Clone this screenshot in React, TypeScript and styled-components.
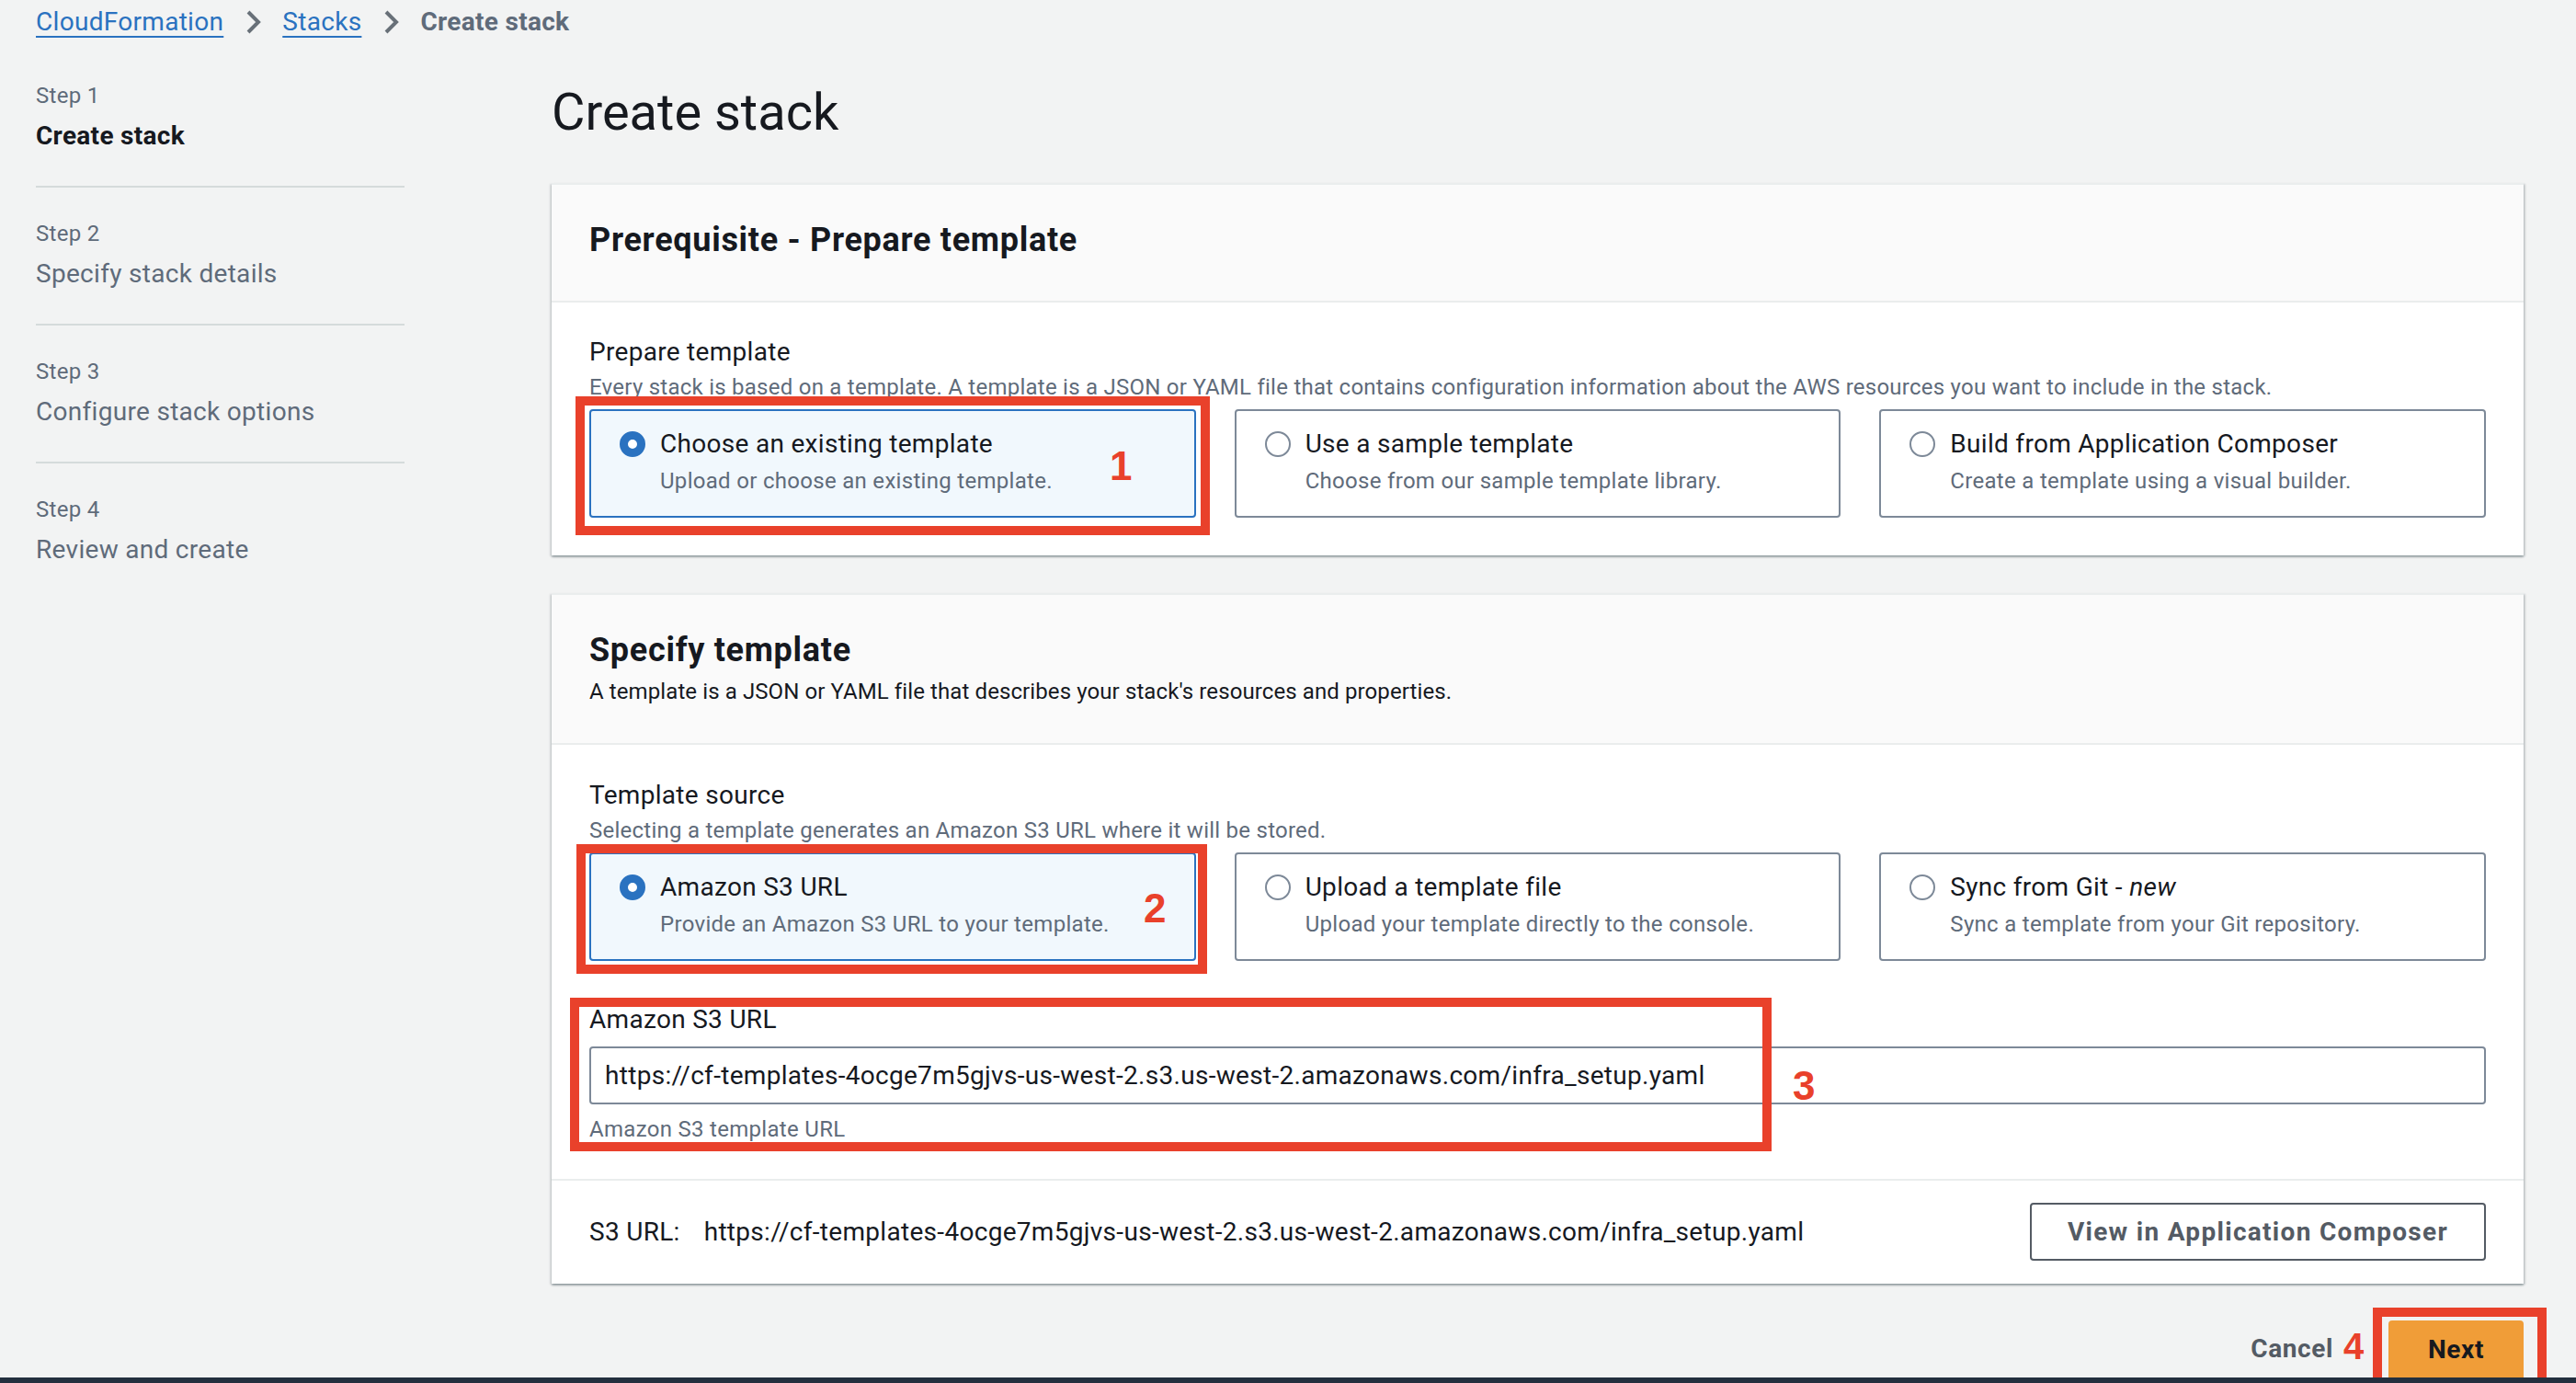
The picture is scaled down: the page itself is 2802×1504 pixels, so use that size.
import React from "react";
import styled, { createGlobalStyle } from "styled-components";

const GlobalStyle = createGlobalStyle`
  *, *::before, *::after { box-sizing: border-box; }
  html, body { margin: 0; padding: 0; background: #f2f3f3; }
  body {
    font-family: Roboto, "Liberation Sans", Arial, sans-serif;
    color: #16191f;
    letter-spacing: 0.3px;
    overflow: hidden;
  }
`;

const RED = "#e9412b";
const BLUE = "#2a72c0";
const GRAY_TEXT = "#5f6b7a";

const Page = styled.div`
  height: 1504px;
  display: flex;
  flex-direction: column;
  overflow: hidden;
`;

const Breadcrumbs = styled.nav`
  display: flex;
  align-items: center;
  gap: 16px;
  height: 44px;
  padding: 4px 0 0 39px;
  font-size: 28px;
  line-height: 40px;
`;

const Crumb = styled.a`
  color: ${BLUE};
  text-decoration: underline;
  text-decoration-thickness: 2px;
  text-underline-offset: 6px;
  cursor: pointer;
`;

const CurrentCrumb = styled.span`
  color: ${GRAY_TEXT};
  font-weight: 700;
`;

const Chevron = styled.svg`
  width: 32px;
  height: 32px;
  flex: none;
`;

const Layout = styled.div`
  flex: 1;
  display: grid;
  grid-template-columns: 401px 1fr;
  column-gap: 160px;
  padding: 0 57px 0 39px;
`;

const StepList = styled.ol`
  list-style: none;
  margin: 0;
  padding: 10px 0 0;
`;

const StepItem = styled.li<{ $last?: boolean }>`
  padding: 34px 0 34px;
  border-bottom: ${(p) => (p.$last ? "none" : "2px solid #d5dbdb")};
`;

const StepLabel = styled.div`
  font-size: 24px;
  line-height: 32px;
  color: ${GRAY_TEXT};
`;

const StepTitle = styled.div<{ $active?: boolean }>`
  margin-top: 8px;
  font-size: 28px;
  line-height: 40px;
  color: ${(p) => (p.$active ? "#16191f" : GRAY_TEXT)};
  font-weight: ${(p) => (p.$active ? 700 : 400)};
`;

const Main = styled.main`
  display: flex;
  flex-direction: column;
`;

const Title = styled.h1`
  margin: 46px 0 45px;
  font-size: 56px;
  line-height: 64px;
  font-weight: 400;
  letter-spacing: 0;
  color: #16191f;
`;

const Cards = styled.div`
  display: flex;
  flex-direction: column;
  gap: 41px;
`;

const Card = styled.section`
  background: #ffffff;
  border-top: 2px solid #eaeded;
  box-shadow: 0 2px 2px 0 rgba(0, 28, 36, 0.28), 2px 1px 2px 0 rgba(0, 28, 36, 0.14),
    -2px 1px 2px 0 rgba(0, 28, 36, 0.1);
`;

const CardHeader = styled.header<{ $bottom: number }>`
  background: #fafafa;
  padding: 38px 41px ${(p) => p.$bottom}px;
  border-bottom: 2px solid #eaeded;
`;

const CardTitle = styled.h2`
  margin: 0;
  font-size: 36px;
  line-height: 44px;
  font-weight: 700;
  letter-spacing: 0.7px;
  color: #16191f;
`;

const CardDescription = styled.p`
  margin: 7px 0 0;
  font-size: 24px;
  line-height: 32px;
  letter-spacing: 0.1px;
  color: #16191f;
`;

const CardBody = styled.div<{ $top: number; $bottom: number }>`
  padding: ${(p) => p.$top}px 41px ${(p) => p.$bottom}px;
`;

const FieldLabel = styled.div`
  font-size: 28px;
  line-height: 40px;
  color: #16191f;
`;

const FieldDescription = styled.div`
  margin-top: 2px;
  font-size: 24px;
  line-height: 32px;
  letter-spacing: 0.25px;
  color: ${GRAY_TEXT};
`;

const TileGrid = styled.div`
  margin-top: 8px;
  display: grid;
  grid-template-columns: repeat(3, 1fr);
  column-gap: 42px;
`;

const Annotated = styled.div`
  position: relative;
`;

const RedBox = styled.div<{ $t: number; $r: number; $b: number; $l: number }>`
  position: absolute;
  top: ${(p) => p.$t}px;
  right: ${(p) => p.$r}px;
  bottom: ${(p) => p.$b}px;
  left: ${(p) => p.$l}px;
  border: 10px solid ${RED};
  pointer-events: none;
  z-index: 1;
`;

const Marker = styled.span<{ $x: number; $y: number; $size?: number }>`
  position: absolute;
  left: ${(p) => p.$x}px;
  top: ${(p) => p.$y}px;
  font-family: "Liberation Sans", Arial, sans-serif;
  font-size: ${(p) => p.$size ?? 44}px;
  line-height: ${(p) => p.$size ?? 44}px;
  font-weight: 700;
  letter-spacing: 0;
  color: ${RED};
  z-index: 1;
`;

const Tile = styled.label<{ $selected?: boolean }>`
  display: flex;
  align-items: flex-start;
  gap: 16px;
  height: 118px;
  padding: 16px 30px 22px 31px;
  border: 2px solid ${(p) => (p.$selected ? BLUE : "#7d8998")};
  border-radius: 4px;
  background: ${(p) => (p.$selected ? "#f1f8fd" : "#ffffff")};
  cursor: pointer;
`;

const Radio = styled.span<{ $checked?: boolean }>`
  flex: none;
  width: 28px;
  height: 28px;
  margin-top: 6px;
  border-radius: 50%;
  background: #ffffff;
  border: ${(p) => (p.$checked ? `9px solid ${BLUE}` : "2px solid #7d8998")};
`;

const TileText = styled.div`
  display: flex;
  flex-direction: column;
`;

const TileTitle = styled.span`
  font-size: 28px;
  line-height: 40px;
  color: #16191f;
  white-space: nowrap;
`;

const TileDescription = styled.span`
  margin-top: 4px;
  font-size: 24px;
  line-height: 32px;
  color: ${GRAY_TEXT};
  white-space: nowrap;
`;

const Field = styled.div`
  margin-top: 44px;
`;

const TextInput = styled.input`
  display: block;
  width: 100%;
  height: 63px;
  margin-top: 9px;
  padding: 0 15px;
  border: 2px solid #7d8998;
  border-radius: 4px;
  background: #ffffff;
  font-family: inherit;
  font-size: 28px;
  letter-spacing: 0.3px;
  color: #16191f;
  outline: none;
`;

const HelperText = styled.div`
  margin-top: 11px;
  font-size: 24px;
  line-height: 32px;
  color: ${GRAY_TEXT};
`;

const CardFooter = styled.footer`
  display: flex;
  align-items: center;
  justify-content: space-between;
  padding: 24px 41px 25px;
  border-top: 2px solid #eaeded;
`;

const UrlLine = styled.div`
  display: flex;
  gap: 26px;
  font-size: 28px;
  line-height: 40px;
  color: #16191f;
`;

const SecondaryButton = styled.button`
  height: 63px;
  padding: 0 39px;
  border: 2px solid #545b64;
  border-radius: 4px;
  background: #ffffff;
  font-family: inherit;
  font-size: 28px;
  font-weight: 700;
  letter-spacing: 1.3px;
  color: #545b64;
  cursor: pointer;
`;

const Actions = styled.div`
  margin-top: 40px;
  display: flex;
  justify-content: flex-end;
  align-items: center;
  gap: 60px;
`;

const LinkButton = styled.button`
  border: none;
  padding: 0;
  background: transparent;
  font-family: inherit;
  font-size: 28px;
  line-height: 40px;
  font-weight: 700;
  letter-spacing: 0.6px;
  color: #545b64;
  cursor: pointer;
`;

const PrimaryButton = styled.button`
  height: 62px;
  width: 147px;
  border: none;
  border-radius: 4px 4px 0 0;
  background: #f09d38;
  font-family: inherit;
  font-size: 28px;
  font-weight: 700;
  letter-spacing: 0.6px;
  color: #16191f;
  cursor: pointer;
`;

const BottomBar = styled.div`
  position: relative;
  z-index: 2;
  height: 6px;
  flex: none;
  background: #232f3e;
`;

const ChevronIcon = () => (
  <Chevron viewBox="0 0 16 16" fill="none">
    <path d="M5.5 2.5l5.5 5.5-5.5 5.5" stroke="#687078" strokeWidth="2" />
  </Chevron>
);

type TileData = { title: React.ReactNode; description: string; selected?: boolean };

const TileCard = ({ title, description, selected }: TileData) => (
  <Tile $selected={selected}>
    <Radio $checked={selected} />
    <TileText>
      <TileTitle>{title}</TileTitle>
      <TileDescription>{description}</TileDescription>
    </TileText>
  </Tile>
);

const steps = [
  { label: "Step 1", title: "Create stack", active: true },
  { label: "Step 2", title: "Specify stack details" },
  { label: "Step 3", title: "Configure stack options" },
  { label: "Step 4", title: "Review and create" },
];

const S3_URL =
  "https://cf-templates-4ocge7m5gjvs-us-west-2.s3.us-west-2.amazonaws.com/infra_setup.yaml";

export default function App() {
  return (
    <Page>
      <GlobalStyle />
      <Breadcrumbs>
        <Crumb>CloudFormation</Crumb>
        <ChevronIcon />
        <Crumb>Stacks</Crumb>
        <ChevronIcon />
        <CurrentCrumb>Create stack</CurrentCrumb>
      </Breadcrumbs>
      <Layout>
        <StepList>
          {steps.map((s, i) => (
            <StepItem key={s.label} $last={i === steps.length - 1}>
              <StepLabel>{s.label}</StepLabel>
              <StepTitle $active={s.active}>{s.title}</StepTitle>
            </StepItem>
          ))}
        </StepList>
        <Main>
          <Title>Create stack</Title>
          <Cards>
            <Card>
              <CardHeader $bottom={44}>
                <CardTitle>Prerequisite - Prepare template</CardTitle>
              </CardHeader>
              <CardBody $top={34} $bottom={41}>
                <FieldLabel>Prepare template</FieldLabel>
                <FieldDescription>
                  Every stack is based on a template. A template is a JSON or YAML file that contains
                  configuration information about the AWS resources you want to include in the stack.
                </FieldDescription>
                <TileGrid>
                  <Annotated>
                    <TileCard
                      selected
                      title="Choose an existing template"
                      description="Upload or choose an existing template."
                    />
                    <RedBox $t={-14} $r={-15} $b={-19} $l={-15} />
                    <Marker $x={566} $y={40}>1</Marker>
                  </Annotated>
                  <TileCard
                    title="Use a sample template"
                    description="Choose from our sample template library."
                  />
                  <TileCard
                    title="Build from Application Composer"
                    description="Create a template using a visual builder."
                  />
                </TileGrid>
              </CardBody>
            </Card>

            <Card>
              <CardHeader $bottom={40}>
                <CardTitle>Specify template</CardTitle>
                <CardDescription>
                  A template is a JSON or YAML file that describes your stack's resources and properties.
                </CardDescription>
              </CardHeader>
              <CardBody $top={35} $bottom={38}>
                <FieldLabel>Template source</FieldLabel>
                <FieldDescription>
                  Selecting a template generates an Amazon S3 URL where it will be stored.
                </FieldDescription>
                <TileGrid>
                  <Annotated>
                    <TileCard
                      selected
                      title="Amazon S3 URL"
                      description="Provide an Amazon S3 URL to your template."
                    />
                    <RedBox $t={-9} $r={-12} $b={-14} $l={-14} />
                    <Marker $x={603} $y={39}>2</Marker>
                  </Annotated>
                  <TileCard
                    title="Upload a template file"
                    description="Upload your template directly to the console."
                  />
                  <TileCard
                    title={
                      <>
                        Sync from Git - <i>new</i>
                      </>
                    }
                    description="Sync a template from your Git repository."
                  />
                </TileGrid>
                <Field>
                  <Annotated>
                    <FieldLabel>Amazon S3 URL</FieldLabel>
                    <TextInput readOnly value={S3_URL} />
                    <HelperText>Amazon S3 template URL</HelperText>
                    <RedBox $t={-4} $r={777} $b={-8} $l={-21} />
                    <Marker $x={1309} $y={70}>3</Marker>
                  </Annotated>
                </Field>
              </CardBody>
              <CardFooter>
                <UrlLine>
                  <span>S3 URL:</span>
                  <span>{S3_URL}</span>
                </UrlLine>
                <SecondaryButton>View in Application Composer</SecondaryButton>
              </CardFooter>
            </Card>
          </Cards>
          <Actions>
            <LinkButton>Cancel</LinkButton>
            <Annotated>
              <PrimaryButton>Next</PrimaryButton>
              <RedBox $t={-14} $r={-25} $b={-20} $l={-17} />
              <Marker $x={-49} $y={8} $size={40}>4</Marker>
            </Annotated>
          </Actions>
        </Main>
      </Layout>
      <BottomBar />
    </Page>
  );
}
